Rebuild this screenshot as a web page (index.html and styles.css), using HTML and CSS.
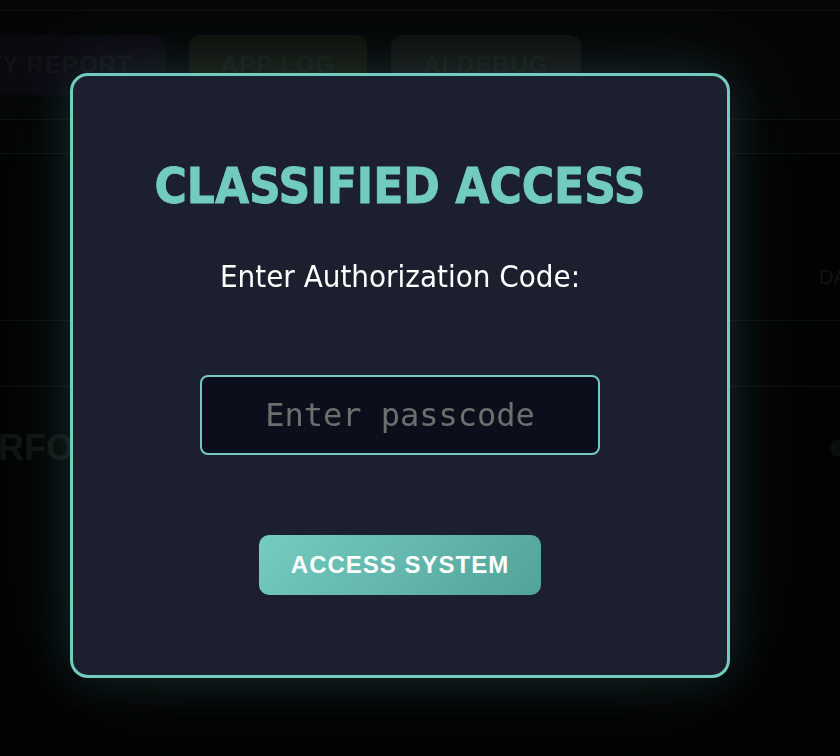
FILE: index.html
```html
<!DOCTYPE html>
<html lang="en">
<head>
<meta charset="utf-8">
<title>Classified Access</title>
<link rel="stylesheet" href="styles.css">
</head>
<body>
<div class="dashboard">
  <div class="topbar"></div>
  <nav class="tabs">
    <div class="tab tab-security">SECURITY REPORT</div>
    <div class="tab tab-applog">APP LOG</div>
    <div class="tab tab-ai">AI DEBUG</div>
  </nav>
  <div class="subbar"></div>
  <section class="panel"><span class="panel-label">DATA</span></section>
  <div class="row"></div>
  <div class="perf">
    <h2 class="perf-title">PERFORMANCE</h2>
    <span class="perf-dot"></span>
  </div>
</div>
<div class="overlay">
  <div class="modal">
    <h1 class="modal-title">CLASSIFIED ACCESS</h1>
    <p class="modal-label">Enter Authorization Code:</p>
    <input class="passcode" type="password" placeholder="Enter passcode">
    <button class="access-btn" type="button">ACCESS SYSTEM</button>
  </div>
</div>
</body>
</html>
```

FILE: styles.css
```css
html, body {
  margin: 0;
  padding: 0;
}

body {
  width: 840px;
  height: 756px;
  overflow: hidden;
  background: #0b0f12;
  font-family: "Liberation Sans", Arial, sans-serif;
}

.dashboard {
  width: 840px;
  overflow: hidden;
}

.topbar {
  height: 10px;
  background: #1c2428;
  border-bottom: 1px solid #3a5a58;
}

.tabs {
  display: flex;
  gap: 24px;
  padding: 24px 0;
  margin-left: -142px;
  background: #182024;
  border-bottom: 1px solid #3a5a58;
}

.tab {
  flex: none;
  height: 60px;
  padding: 0 32px;
  display: flex;
  align-items: center;
  border-radius: 12px;
  font-weight: bold;
  font-size: 24px;
  letter-spacing: 1px;
}

.tab-security {
  background: #3a3258;
  color: #5c5a78;
}

.tab-applog {
  background: #55573a;
  color: #68786f;
}

.tab-ai {
  background: #555056;
  color: #6a7872;
}

.subbar {
  height: 33px;
  background: #121a1d;
  border-bottom: 1px solid #3a5a58;
}

.panel {
  height: 167px;
  box-sizing: border-box;
  padding: 112px 0 0 819px;
  border-bottom: 1px solid #3a5a58;
  white-space: nowrap;
}

.panel-label {
  font-size: 20px;
  color: #5a6466;
}

.row {
  height: 65px;
  border-bottom: 1px solid #3a5a58;
}

.perf {
  display: flex;
  align-items: center;
  justify-content: space-between;
  padding-top: 40px;
}

.perf-title {
  margin: 0 0 0 -50px;
  font-size: 36px;
  line-height: 42px;
  font-weight: bold;
  color: #506862;
  white-space: nowrap;
}

.perf-dot {
  width: 18px;
  height: 18px;
  border-radius: 50%;
  background: #3a4848;
  margin-right: -8px;
}

.overlay {
  position: fixed;
  inset: 0;
  box-sizing: border-box;
  padding: 0 40px 5px 0;
  display: flex;
  align-items: center;
  justify-content: center;
  background: rgba(0, 0, 0, 0.82);
}

.modal {
  width: 660px;
  box-sizing: border-box;
  padding: 82px 40px 80px;
  display: flex;
  flex-direction: column;
  align-items: center;
  background: #1c1f2e;
  border: 3px solid #72cbbf;
  border-radius: 18px;
  box-shadow: 0 0 50px rgba(114, 203, 191, 0.17), 0 0 110px rgba(114, 203, 191, 0.07);
}

.modal-title {
  margin: 0 0 42px;
  font-family: "DejaVu Sans Condensed", "DejaVu Sans", sans-serif;
  font-stretch: condensed;
  font-weight: bold;
  font-size: 49px;
  line-height: 58px;
  color: #72cbbf;
  -webkit-text-stroke: 0.8px #72cbbf;
  white-space: nowrap;
}

.modal-label {
  margin: 0 0 81px;
  font-family: "DejaVu Sans Condensed", "DejaVu Sans", sans-serif;
  font-stretch: condensed;
  font-size: 31px;
  line-height: 36px;
  color: #ffffff;
  white-space: nowrap;
}

.passcode {
  width: 400px;
  height: 80px;
  box-sizing: border-box;
  margin: 0 0 80px;
  padding: 0 16px;
  border: 2px solid #72cbbf;
  border-radius: 8px;
  background: #0b0f1b;
  color: #ffffff;
  font-family: "DejaVu Sans Mono", monospace;
  font-size: 32px;
  text-align: center;
  outline: none;
}

.passcode::placeholder {
  color: #6e6e6e;
}

.access-btn {
  height: 60px;
  padding: 0 32px;
  border: none;
  border-radius: 10px;
  background: linear-gradient(135deg, #75ccc1, #52a398);
  color: #ffffff;
  font-family: "Liberation Sans", Arial, sans-serif;
  font-weight: bold;
  font-size: 24px;
  letter-spacing: 1px;
  cursor: pointer;
}
```
